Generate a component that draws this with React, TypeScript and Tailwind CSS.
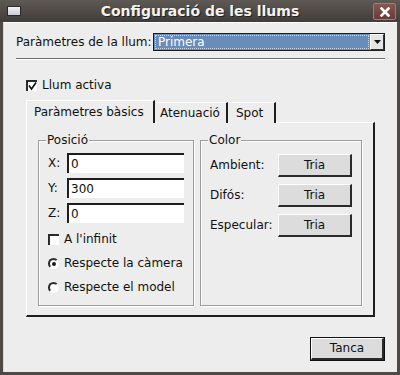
import React from "react";

function Raised({ children, className = "" }: { children: React.ReactNode; className?: string }) {
  return (
    <div
      className={`flex items-center justify-center border-t border-l border-t-white border-l-white border-r-2 border-b-2 border-r-[#2a2a2a] border-b-[#2a2a2a] bg-[#dcdcdc] ${className}`}
    >
      {children}
    </div>
  );
}

function Field({ label, value }: { label: string; value: string }) {
  return (
    <div className="flex items-center">
      <span className="w-[19px]">{label}</span>
      <div className="flex h-[20px] w-[117px] items-center border-t-2 border-l-2 border-t-[#1e1e1e] border-l-[#1e1e1e] bg-white pl-[2px]">
        {value}
      </div>
    </div>
  );
}

function Radio({ checked, label }: { checked?: boolean; label: string }) {
  return (
    <div className="flex h-[15px] items-center gap-[5px]">
      <span className="flex size-[11px] items-center justify-center rounded-full border-2 border-t-[#2a2a2a] border-l-[#2a2a2a] border-r-white border-b-white bg-white">
        {checked && <span className="size-[4px] rounded-full bg-[#1e1e1e]" />}
      </span>
      <span>{label}</span>
    </div>
  );
}

function Check({ checked, label }: { checked?: boolean; label: string }) {
  return (
    <div className="flex h-[15px] items-center gap-[5px]">
      <span className="flex size-[11px] items-center justify-center border-t-2 border-l-2 border-t-[#2a2a2a] border-l-[#2a2a2a] bg-white">
        {checked && (
          <svg width="9" height="9" viewBox="0 0 9 9">
            <path d="M1 3.5 L3.5 7 L8 0.5" fill="none" stroke="#111" strokeWidth="1.6" />
          </svg>
        )}
      </span>
      <span>{label}</span>
    </div>
  );
}

export default function App() {
  return (
    <div className="flex h-[375px] w-[400px] flex-col bg-[#4f4a46] px-[3px] pb-[3px] font-['DejaVu_Sans',sans-serif] text-[12px] leading-[15px] text-[#111]">
      {/* title bar */}
      <div className="relative -mx-[3px] flex h-[22px] items-center justify-center bg-gradient-to-b from-[#5e5954] to-[#413d39]">
        <span className="absolute left-[7px] top-[6px] h-[10px] w-[14px] border border-[#2b2825] bg-gradient-to-b from-[#f4f4f4] to-[#c9cdd6]" />
        <span className="text-[14px] font-bold text-[#f2f2f0] [text-shadow:1px_1px_0_#222]">
          Configuració de les llums
        </span>
        <span className="absolute right-[4px] top-[3px] flex h-[17px] w-[23px] items-center justify-center rounded-[2px] border border-[#a87a76] bg-gradient-to-b from-[#8a5551] to-[#6b3b38]">
          <svg width="10" height="10" viewBox="0 0 10 10">
            <path d="M1.5 1.5 L8.5 8.5 M8.5 1.5 L1.5 8.5" stroke="white" strokeWidth="2.6" strokeLinecap="square" />
          </svg>
        </span>
      </div>

      {/* body */}
      <div className="flex flex-1 flex-col border-t border-l border-t-white border-l-[#d8d8d8] bg-[#ededed] px-[12px]">
        <div className="mt-[10px] flex h-[18px] items-center">
          <span className="w-[137px]">Paràmetres de la llum:</span>
          <div className="flex h-[18px] flex-1 items-stretch border border-[#1e1e1e] bg-[#6a8cb9]">
            <div className="m-[1px] flex flex-1 items-center border border-dotted border-[#c9d6e8] pl-[2px] text-white">
              Primera
            </div>
            <div className="flex w-[14px] items-center justify-center border-t border-l border-t-white border-l-white border-r border-b border-r-[#333] border-b-[#333] bg-[#e4e4e4]">
              <svg width="7" height="4" viewBox="0 0 7 4">
                <path d="M0 0 H7 L3.5 4 Z" fill="#111" />
              </svg>
            </div>
          </div>
        </div>

        <div className="mt-[7px] h-[2px] border-t border-b border-t-[#6e6e6e] border-b-white" />

        <div className="mt-[18px] ml-[10px]">
          <Check checked label="Llum activa" />
        </div>

        {/* notebook */}
        <div className="mt-[7px] ml-[10px] mr-[10px] flex flex-col">
          <div className="relative z-10 -mb-px flex h-[23px] items-end">
            <div className="flex h-[23px] w-[129px] items-center border-t border-l border-t-white border-l-white border-r-2 border-r-[#1e1e1e] bg-[#ededed] pl-[7px]">
              Paràmetres bàsics
            </div>
            <div className="ml-[1px] flex h-[21px] w-[72px] items-center border-t border-t-white border-r-2 border-r-[#1e1e1e] bg-[#ededed] pl-[4px]">
              Atenuació
            </div>
            <div className="ml-[1px] flex h-[21px] w-[47px] items-center border-t border-t-white border-r-2 border-r-[#1e1e1e] bg-[#ededed] pl-[7px]">
              Spot
            </div>
          </div>
          <div className="flex h-[195px] gap-[6px] border-t border-l border-t-white border-l-white border-r-2 border-b-2 border-r-[#1e1e1e] border-b-[#1e1e1e] px-[11px] pt-[10px]">
            <fieldset className="h-[173px] w-[157px] border border-[#9c9c9c] pl-[9px] shadow-[inset_1px_1px_0_white,1px_1px_0_white]">
              <legend className="ml-[-2px] bg-[#ededed] px-[1px]">Posició</legend>
              <div className="mt-[5px] flex flex-col gap-[5px]">
                <Field label="X:" value="0" />
                <Field label="Y:" value="300" />
                <Field label="Z:" value="0" />
              </div>
              <div className="mt-[9px] flex flex-col gap-[9px]">
                <Check label="A l'infinit" />
                <Radio checked label="Respecte la càmera" />
                <Radio label="Respecte el model" />
              </div>
            </fieldset>
            <fieldset className="h-[173px] w-[163px] border border-[#9c9c9c] pl-[9px] shadow-[inset_1px_1px_0_white,1px_1px_0_white]">
              <legend className="ml-[-2px] bg-[#ededed] px-[1px]">Color</legend>
              <div className="mt-[6px] flex flex-col gap-[7px]">
                {["Ambient:", "Difós:", "Especular:"].map((l) => (
                  <div key={l} className="flex items-center">
                    <span className="w-[68px]">{l}</span>
                    <Raised className="h-[23px] w-[74px]">Tria</Raised>
                  </div>
                ))}
              </div>
            </fieldset>
          </div>
        </div>

        <div className="mt-[20px] flex justify-end">
          <div className="border border-[#111]">
            <Raised className="h-[22px] w-[73px]">Tanca</Raised>
          </div>
        </div>
      </div>
    </div>
  );
}
